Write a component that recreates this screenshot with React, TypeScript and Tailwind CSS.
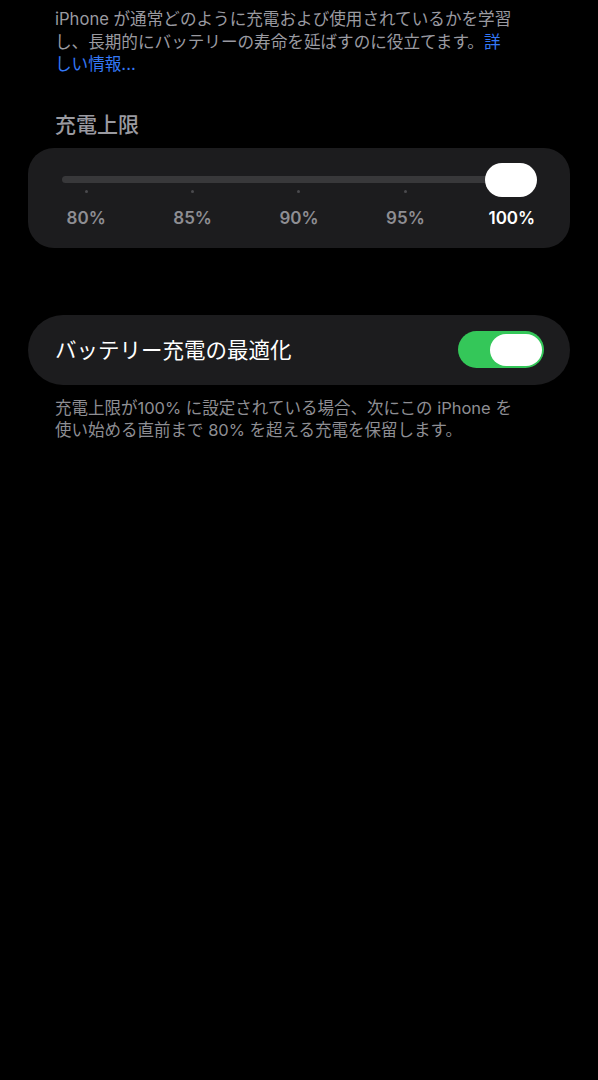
const font = { fontFamily: 'Inter, "Noto Sans CJK JP", sans-serif' };

const marks = ["80%", "85%", "90%", "95%", "100%"];

export default function App() {
  return (
    <div className="min-h-screen w-full bg-black pt-[8px]" style={font}>
      <p className="px-[55px] text-[16.6px] leading-[22.5px] text-[#9a9aa0] whitespace-nowrap">
        iPhone が通常どのように充電および使用されているかを学習
        <br />
        し、長期的にバッテリーの寿命を延ばすのに役立てます。
        <span className="text-[#3478f6]">詳</span>
        <br />
        <span className="text-[#3478f6]">しい情報...</span>
      </p>

      <h2 className="mt-[35px] px-[55px] text-[21px] leading-[28px] font-medium text-[#9a9aa0]">
        充電上限
      </h2>

      <section className="mx-[28px] mt-[9px] rounded-[26px] bg-[#1c1c1e] pt-[15px] pb-[20px]">
        <div className="relative ml-[34px] mr-[33px] h-[34px]">
          <div className="absolute left-0 right-[26px] top-[13px] h-[7px] rounded-full bg-[#38383a]" />
          <div className="absolute right-0 top-0 h-[34px] w-[52px] rounded-full bg-white" />
        </div>
        <div className="-mt-[7px] grid grid-cols-5 px-[5px]">
          {marks.map((m, i) => (
            <div key={m} className="flex justify-center">
              <span className={`h-[3px] w-[3px] rounded-full ${i < 4 ? "bg-[#4a4a4e]" : "bg-transparent"}`} />
            </div>
          ))}
        </div>
        <div className="mt-[15px] grid grid-cols-5 px-[5px]">
          {marks.map((m, i) => (
            <span
              key={m}
              className={`text-center text-[17px] leading-[20px] font-semibold ${i === 4 ? "text-white" : "text-[#8e8e93]"}`}
            >
              {m}
            </span>
          ))}
        </div>
      </section>

      <section className="mx-[28px] mt-[67px] flex h-[70px] items-center justify-between rounded-full bg-[#1c1c1e] pl-[27px] pr-[26px]">
        <span className="text-[21.5px] leading-[28px] text-white">バッテリー充電の最適化</span>
        <div className="relative h-[37px] w-[86px] rounded-full bg-[#34c759]">
          <div className="absolute right-[2px] top-[2.5px] h-[32px] w-[52px] rounded-full bg-white" />
        </div>
      </section>

      <p className="mt-[12px] px-[55px] text-[16.5px] leading-[22px] text-[#8e8e93] whitespace-nowrap">
        充電上限が100% に設定されている場合、次にこの iPhone を
        <br />
        使い始める直前まで 80% を超える充電を保留します。
      </p>
    </div>
  );
}
